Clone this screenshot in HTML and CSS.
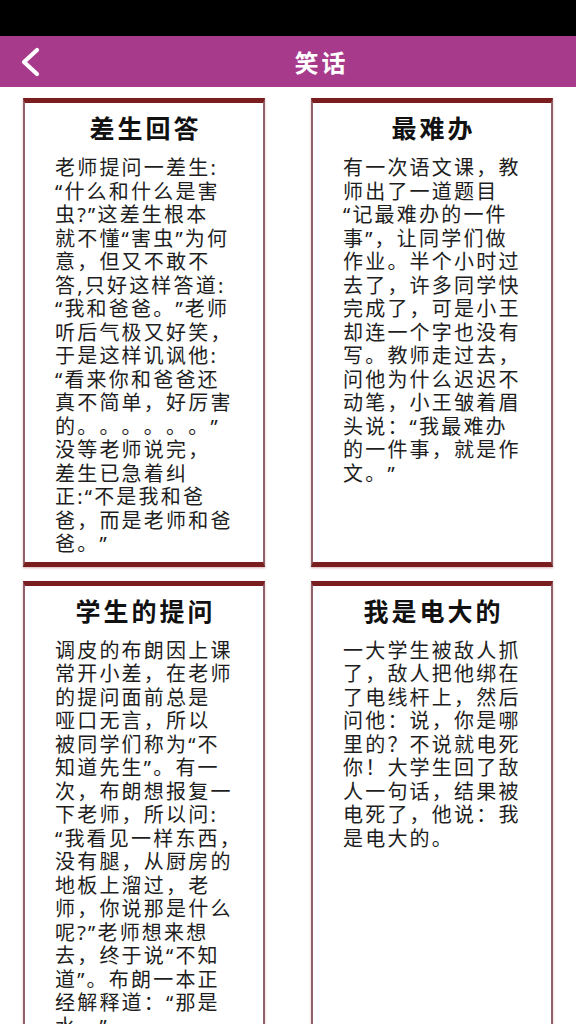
FILE: index.html
```html
<!DOCTYPE html>
<html>
	<head>
		<meta charset="utf-8">
		<title>笑话</title>
		<meta name="viewport" content="width=device-width" />
		<link rel="stylesheet" href="styles.css">
	</head>
	<body>

		<div class="statusbar"></div>

		<div class="topbar">
			<a class="back" href="#">
				<svg width="24" height="30" viewBox="0 0 24 30">
					<path d="M18 3 L5 15 L18 27" fill="none" stroke="#fff" stroke-width="4.2" stroke-linecap="round" stroke-linejoin="round" />
				</svg>
			</a>
			<div class="title">笑话</div>
		</div>

		<div class="jokes">

			<div class="card">
				<h2>差生回答</h2>
				<p>老师提问一差生:<br>“什么和什么是害<br>虫?”这差生根本<br>就不懂“害虫”为何<br>意，但又不敢不<br>答,只好这样答道:<br>“我和爸爸。”老师<br>听后气极又好笑，<br>于是这样讥讽他:<br>“看来你和爸爸还<br>真不简单，好厉害<br>的。。。。。。”<br>没等老师说完，<br>差生已急着纠<br>正:“不是我和爸<br>爸，而是老师和爸<br>爸。”</p>
			</div>

			<div class="card">
				<h2>最难办</h2>
				<p>有一次语文课，教<br>师出了一道题目<br>“记最难办的一件<br>事”，让同学们做<br>作业。半个小时过<br>去了，许多同学快<br>完成了，可是小王<br>却连一个字也没有<br>写。教师走过去，<br>问他为什么迟迟不<br>动笔，小王皱着眉<br>头说：“我最难办<br>的一件事，就是作<br>文。”</p>
			</div>

			<div class="card">
				<h2>学生的提问</h2>
				<p>调皮的布朗因上课<br>常开小差，在老师<br>的提问面前总是<br>哑口无言，所以<br>被同学们称为“不<br>知道先生”。有一<br>次，布朗想报复一<br>下老师，所以问:<br>“我看见一样东西，<br>没有腿，从厨房的<br>地板上溜过，老<br>师，你说那是什么<br>呢?”老师想来想<br>去，终于说“不知<br>道”。布朗一本正<br>经解释道：“那是<br>水。”</p>
			</div>

			<div class="card">
				<h2>我是电大的</h2>
				<p>一大学生被敌人抓<br>了，敌人把他绑在<br>了电线杆上，然后<br>问他：说，你是哪<br>里的？不说就电死<br>你！大学生回了敌<br>人一句话，结果被<br>电死了，他说：我<br>是电大的。</p>
			</div>

		</div>

	</body>
</html>
```

FILE: styles.css
```css
* {
	margin: 0;
	padding: 0;
	box-sizing: border-box;
}

html, body {
	background: #fff;
	font-family: "Noto Sans", "Noto Sans CJK SC", sans-serif;
	color: #1a1a1a;
	text-spacing-trim: space-all;
}

.statusbar {
	height: 36px;
	background: #000;
}

.topbar {
	display: flex;
	align-items: center;
	height: 51px;
	background: #a83a8c;
	color: #fff;
}

.back {
	display: flex;
	align-items: center;
	width: 64px;
	height: 100%;
	padding-left: 19px;
}

.back svg {
	display: block;
}

.title {
	flex: 1;
	text-align: center;
	font-size: 24px;
	font-weight: 700;
	letter-spacing: 3px;
	padding-left: 3px;
}

.jokes {
	display: grid;
	grid-template-columns: 1fr 1fr;
	column-gap: 46px;
	row-gap: 14px;
	padding: 11px 23px 0;
}

.card {
	border: 2px solid #91606b;
	border-top: 5px solid #7a1d1f;
	border-bottom: 5px solid #7a1d1f;
	box-shadow: 0 1px 2px rgba(140, 40, 40, 0.35);
	padding: 10px 8px 6px 30px;
}

.card h2 {
	font-size: 25px;
	line-height: 30px;
	font-weight: 700;
	text-align: center;
	letter-spacing: 3px;
	padding-left: 3px;
	margin-left: -22px;
	color: #111;
}

.card p {
	margin-top: 13px;
	font-size: 20px;
	line-height: 23.5px;
	letter-spacing: 2.2px;
	white-space: nowrap;
	color: #1e1e1e;
}
```
